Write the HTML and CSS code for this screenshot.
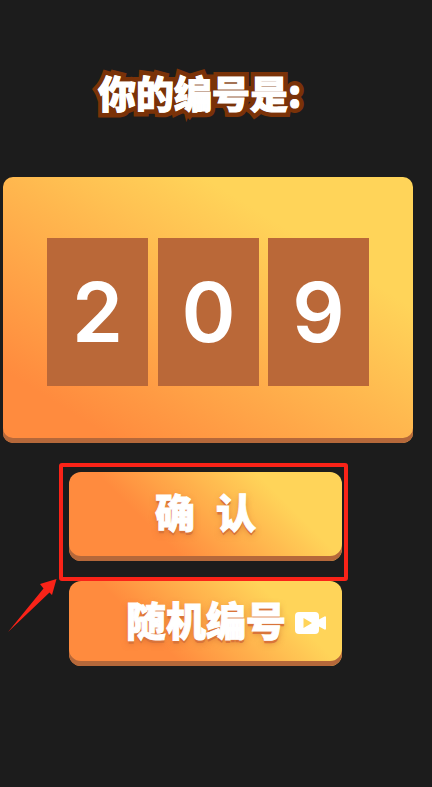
FILE: index.html
```html
<!DOCTYPE html>
<html lang="zh-CN">
<head>
    <meta charset="UTF-8">
    <meta name="viewport" content="width=device-width, initial-scale=1.0">
    <title>你的编号是</title>
    <link rel="stylesheet" href="styles.css">
</head>
<body>
    <div class="page">
        <h1 class="title" data-text="你的编号是:">你的编号是:</h1>
        <div class="number-card">
            <div class="digit">2</div>
            <div class="digit">0</div>
            <div class="digit">9</div>
        </div>
        <button class="btn btn-confirm" type="button">确 认</button>
        <button class="btn btn-random" type="button">
            <span>随机编号</span>
            <svg class="video-icon" viewBox="0 0 31 22" aria-hidden="true">
                <path fill="#fff" fill-rule="evenodd" d="M4 0h16a4 4 0 0 1 4 4v14a4 4 0 0 1-4 4H4a4 4 0 0 1-4-4V4a4 4 0 0 1 4-4zM8.500 6v10l8.500-5z"/>
                <path fill="#fff" d="M23 8 29.500 4.500a1 1 0 0 1 1.500 1v11a1 1 0 0 1-1.500 1L23 14z"/>
            </svg>
        </button>

        <!-- annotation drawn on top of the screenshot -->
        <div class="mark-box"></div>
        <svg class="mark-arrow" viewBox="0 0 60 70" aria-hidden="true">
            <polygon fill="#fa2318" points="8,62 43.500,18.500 40,14 56.500,9 52,25 49.500,22.500"/>
        </svg>
    </div>
</body>
</html>
```

FILE: styles.css
```css
body {
    margin: 0;
    background-color: #1c1c1c;
    font-family: "Noto Sans CJK SC", "Liberation Sans", sans-serif;
    color: #fff;
}
.page {
    position: relative;
    height: 787px;
    overflow: hidden;
    padding-top: 63px;
    box-sizing: border-box;
}
.title {
    position: relative;
    width: max-content;
    margin: 0 0 0 98px;
    height: 114px;
    font-size: 38px;
    line-height: 58px;
    font-weight: 900;
    white-space: nowrap;
    -webkit-text-stroke: 10px #7a3208;
    paint-order: stroke fill;
}
/* second layer so the white fill is heavier than the outline allows */
.title::after {
    content: attr(data-text);
    position: absolute;
    left: 0;
    top: 0;
    -webkit-text-stroke: 1px #fff;
}
.number-card {
    display: flex;
    gap: 10px;
    align-items: center;
    box-sizing: border-box;
    width: 410px;
    height: 266px;
    margin-left: 3px;
    padding: 4px 0 0 44px;
    border-radius: 10px;
    background: linear-gradient(32deg, #ff8b3e 14%, #ffd459 75%);
    box-shadow: inset 0 -5px 0 #b5683a;
}
.digit {
    width: 101px;
    height: 148px;
    background: #ba6838;
    font-family: Inter, sans-serif;
    font-size: 82px;
    font-weight: 600;
    line-height: 150px;
    text-align: center;
}
.digit:last-child {
    margin-left: -1px;
}
.btn {
    display: flex;
    justify-content: center;
    align-items: center;
    box-sizing: border-box;
    width: 273px;
    margin-left: 69px;
    border: none;
    border-radius: 12px;
    background: linear-gradient(45deg, #ff8b3e 32%, #ffd459 76%);
    box-shadow: inset 0 -5px 0 #b5683a;
    color: #fff;
    font-family: inherit;
    font-size: 40px;
    font-weight: 900;
    -webkit-text-stroke: 1px #fff;
    text-shadow: 0 3px 0 #d9743a, 0 3px 6px rgba(190, 90, 40, 0.5);
}
.btn-confirm {
    height: 89px;
    margin-top: 29px;
    padding: 0 0 11px;
    word-spacing: 12px;
    white-space: pre;
}
.btn-random {
    gap: 9px;
    height: 85px;
    margin-top: 20px;
    padding: 0 0 9px 41px;
}
.video-icon {
    flex: none;
    width: 31px;
    height: 22px;
    margin-top: 7px;
}
.mark-box {
    position: absolute;
    left: 59px;
    top: 463px;
    width: 281px;
    height: 110px;
    border: 4px solid #fa2318;
    border-radius: 3px;
}
.mark-arrow {
    position: absolute;
    left: 0;
    top: 570px;
    width: 60px;
    height: 70px;
}
```
